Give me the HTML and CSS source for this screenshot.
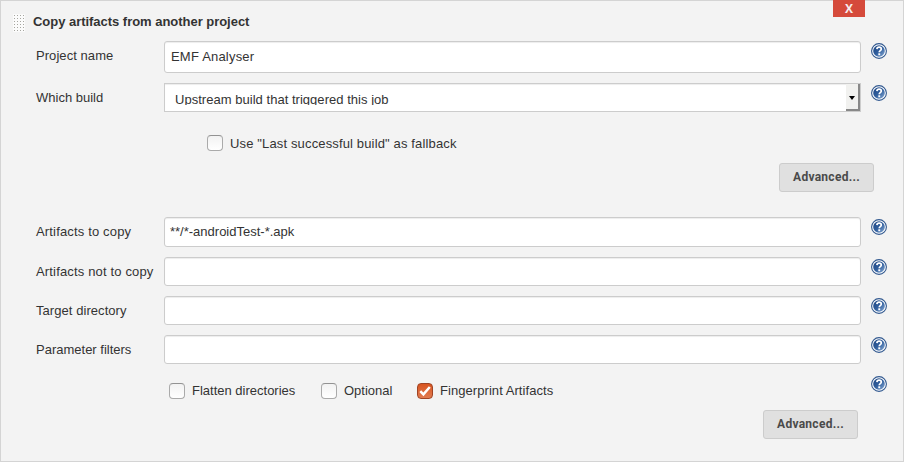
FILE: index.html
```
<!DOCTYPE html>
<html lang="en">
<head>
<meta charset="utf-8">
<title>Copy artifacts from another project</title>
<link rel="stylesheet" href="styles.css">
</head>
<body>
<svg class="defs" width="0" height="0">
  <defs>
    <linearGradient id="blue" x1="0" y1="0" x2="1" y2="1">
      <stop offset="0" stop-color="#1d4480"/><stop offset=".5" stop-color="#315f9e"/><stop offset="1" stop-color="#8badd6"/>
    </linearGradient>
    <symbol id="help" viewBox="0 0 16 16">
      <circle cx="8" cy="8" r="7.4" fill="#fff" stroke="#31588f" stroke-width="1.1"/>
      <circle cx="8" cy="8" r="5.8" fill="url(#blue)"/>
      <path d="M5.9 6.1C6 4.7 6.9 4.1 8.1 4.1c1.3 0 2.2.7 2.2 1.8 0 1.6-2.1 1.8-2.1 3.4" fill="none" stroke="#fff" stroke-width="1.7"/>
      <rect x="7.3" y="10.3" width="1.9" height="1.9" fill="#fff"/>
    </symbol>
  </defs>
</svg>
<main class="panel">
  <button class="delete">X</button>
  <header class="header"><span class="grip"></span><h1 class="title">Copy artifacts from another project</h1></header>
  <div class="row row-name">
    <label class="label l-name">Project name</label>
    <div class="input"><span class="v-name">EMF Analyser</span></div>
    <svg class="help"><use href="#help"/></svg>
  </div>
  <div class="row row-build">
    <label class="label">Which build</label>
    <div class="select"><span class="value">Upstream build that triggered this job</span><span class="arrow"></span></div>
    <svg class="help"><use href="#help"/></svg>
  </div>
  <div class="fallback"><span class="box"></span><span class="t-fall">Use "Last successful build" as fallback</span></div>
  <div class="actions first"><button class="button">Advanced...</button></div>
  <div class="row row-copy">
    <label class="label l-copy">Artifacts to copy</label>
    <div class="input">**/*-androidTest-*.apk</div>
    <svg class="help"><use href="#help"/></svg>
  </div>
  <div class="row">
    <label class="label l-copy">Artifacts not to copy</label>
    <div class="input"></div>
    <svg class="help"><use href="#help"/></svg>
  </div>
  <div class="row">
    <label class="label l-name">Target directory</label>
    <div class="input"></div>
    <svg class="help"><use href="#help"/></svg>
  </div>
  <div class="row">
    <label class="label">Parameter filters</label>
    <div class="input"></div>
    <svg class="help"><use href="#help"/></svg>
  </div>
  <div class="row row-options">
    <div class="options">
      <span class="option flatten"><span class="box"></span><span>Flatten directories</span></span>
      <span class="option optional"><span class="box"></span><span>Optional</span></span>
      <span class="option fingerprint"><span class="box checked"><svg viewBox="0 0 16 16" width="16" height="16"><path d="M3.3 8.2 6.4 11.4 12.8 4" fill="none" stroke="#fff" stroke-width="2.5"/></svg></span><span>Fingerprint Artifacts</span></span>
    </div>
    <svg class="help"><use href="#help"/></svg>
  </div>
  <div class="actions last"><button class="button">Advanced...</button></div>
</main>
</body>
</html>
```
FILE: styles.css
```
* { box-sizing: border-box; }
body {
  margin: 0;
  font: 13px/16px "Liberation Sans", Arial, sans-serif;
  color: #333;
}
.defs { position: absolute; }
.panel {
  position: relative;
  width: 904px;
  height: 462px;
  background: #f3f3f3;
  border: 1px solid #d4d4d4;
}
.delete {
  position: absolute;
  top: -1px;
  left: 832px;
  width: 32px;
  height: 17px;
  padding: 0;
  border: 0;
  background: #d54a3b;
  color: #f6eeee;
  font: bold 12px/15px "Open Sans", sans-serif;
}
.header { display: flex; height: 40px; padding: 13px 0 0 12px; }
.grip {
  width: 12px;
  height: 18px;
  margin-right: 8px;
  background: #fbfbfb radial-gradient(circle at 1.5px 1.5px, #a6a6a0 0 .8px, transparent 1px) 0 0 / 3px 3px;
}
.title { margin: 0; font-size: 13px; line-height: 16px; letter-spacing: -.03px; white-space: nowrap; }
.row {
  display: grid;
  grid-template-columns: 128px 697px 16px;
  align-items: start;
  height: 39px;
  padding-left: 35px;
}
.label { padding-top: 7px; white-space: nowrap; }
.l-name { letter-spacing: .06px; }
.l-copy { letter-spacing: .16px; }
.v-name { letter-spacing: .2px; }
.t-fall { padding-top: 1px; letter-spacing: .145px; }
.help { width: 16px; height: 16px; margin: 2px 0 0 10px; }
.input {
  height: 29px;
  padding: 6px 5px;
  background: #fff;
  border: 1px solid #ccc;
  border-radius: 3px;
  box-shadow: inset 0 1px 1px #00000013;
}
.row-name { height: 42px; }
.row-name .input { height: 32px; padding: 7px 6px; }
.row-build { height: 52px; }
.row-copy { height: 40px; }
.row-copy .input { height: 30px; }
.select {
  display: flex;
  height: 29px;
  background: #fff;
  border: 1px solid #ccc;
  box-shadow: inset 0 1px 1px #00000013;
}
.value {
  flex: 1;
  height: 21px;
  padding: 8px 0 0 10px;
  overflow: hidden;
  letter-spacing: .03px;
  white-space: nowrap;
}
.arrow {
  display: flex;
  align-items: center;
  justify-content: center;
  width: 14px;
  height: 27px;
  background: #f1f1ef;
  border-right: 2px solid #888;
  border-bottom: 2px solid #888;
}
.arrow::before {
  content: "";
  margin-top: 3px;
  border: 3.5px solid transparent;
  border-top: 4px solid #000;
  border-bottom: 0;
}
.box {
  display: block;
  flex: none;
  width: 16px;
  height: 16px;
  margin-right: 7px;
  border: 1px solid #aaa;
  border-top-color: #929292;
  border-radius: 4px;
  background: linear-gradient(#f2f2f2, #fff);
}
.checked { border-color: #a04424; background: linear-gradient(#d85420, #e17c51); }
.checked svg { display: block; margin: -1px; }
.fallback { display: flex; height: 28px; padding-left: 206px; white-space: nowrap; }
.actions { display: flex; justify-content: flex-end; }
.first { height: 54px; padding-right: 29px; }
.last { padding-right: 45px; }
.button {
  width: 95px;
  height: 29px;
  padding: 0;
  border: 1px solid #ccc;
  border-radius: 3px;
  background: #e0e0e0;
  color: #4a4a4a;
  font: bold 12px/27px Roboto, sans-serif;
  letter-spacing: .27px;
}
.row-options { grid-template-columns: 825px 16px; height: 36px; }
.options { display: flex; padding: 9px 0 0 133px; white-space: nowrap; }
.option { display: flex; }
.flatten { width: 152px; }
.optional { width: 96px; }
.fingerprint { letter-spacing: .06px; }
```
